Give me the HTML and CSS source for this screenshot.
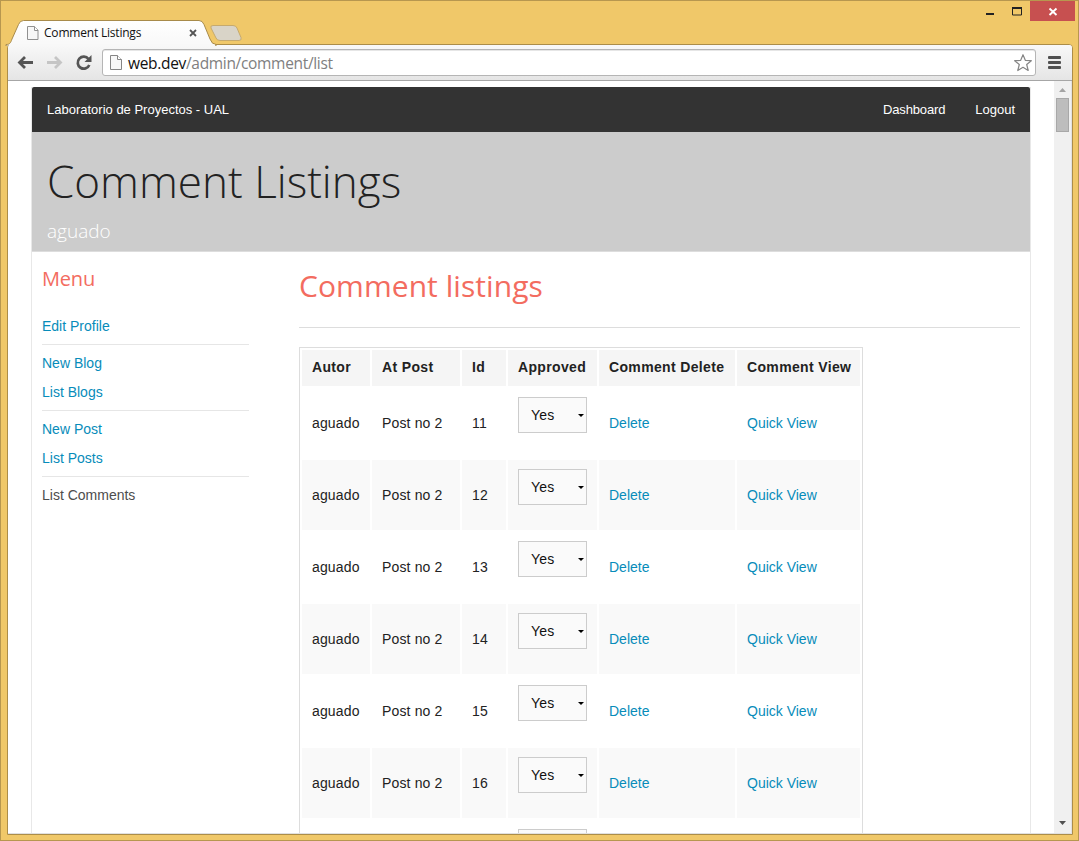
FILE: index.html
```html
<!DOCTYPE html>
<html lang="en">
<head>
<meta charset="utf-8">
<title>Comment Listings</title>
<link rel="stylesheet" href="styles.css">
</head>
<body>
<div class="window">
  <header class="tabstrip">
    <svg class="tab-shapes" width="260" height="46" viewBox="0 0 260 46">
      <defs><linearGradient id="tabfill" x1="0" y1="0" x2="0" y2="1"><stop offset="0" stop-color="#fff"/><stop offset="1" stop-color="#f8f8f8"/></linearGradient></defs>
      <path d="M6 44.5C10 44.500 10.500 43 12 39L18.500 24.500Q20 20.500 23.500 20.500H199Q202.500 20.500 204 24.500L210 39Q212 44.500 216 44.500V46H6Z" fill="url(#tabfill)" stroke="#a88b4b"/>
      <path d="M9 45.500H215" stroke="#f8f8f8" stroke-width="2"/>
      <path d="M213 25.500H233Q236 25.500 237 28L241 37.500Q242 40.500 239 40.500H220Q217 40.500 216 38L211 28Q210 25.500 213 25.500Z" fill="#d9d4c8" stroke="#c6aa6e"/>
    </svg>
    <div class="tab">
      <svg class="page-icon" width="12" height="14" viewBox="0 0 12 14"><path d="M.5.5H7.500L11 4V13.500H.5Z" fill="#f7f7f7" stroke="#909090"/><path d="M7.500.5V4.500H11" fill="#fff" stroke="#909090"/></svg>
      <span class="tab-title">Comment Listings</span>
      <svg class="tab-close" width="8" height="8" viewBox="0 0 8 8"><path d="M1 1L7 7M7 1L1 7" stroke="#555" stroke-width="1.800"/></svg>
    </div>
    <div class="controls">
      <svg width="90" height="21" viewBox="0 0 90 21"><path d="M1 13H9V15H1Z" fill="#222"/><path d="M28 8.500H36.500V15H27.500V8" fill="none" stroke="#222"/><path d="M27 7H37V9H27Z" fill="#222"/><path d="M45 1H90V21H45Z" fill="#c75050"/><path d="M64.500 8.500L71.500 15M71.500 8.500L64.500 15" stroke="#fff" stroke-width="1.900"/></svg>
    </div>
  </header>
  <div class="frame">
    <nav class="toolbar">
      <svg class="nav-icons" width="76" height="20" viewBox="0 0 76 20">
        <path d="M17 9.500H4M9 4L3.500 9.500L9 15" fill="none" stroke="#555" stroke-width="2.800"/>
        <path d="M31 9.500H44M39 4L44.500 9.500L39 15" fill="none" stroke="#c5c5c5" stroke-width="2.800"/>
        <path d="M73.300 12A6 6 0 1 1 72.500 6" fill="none" stroke="#555" stroke-width="2.700"/><path d="M75.500 2V9H68.500Z" fill="#555"/>
      </svg>
      <div class="address">
        <svg class="page-icon" width="12" height="15" viewBox="0 0 12 15"><path d="M.5.5H7.500L11.500 4.500V14.500H.5Z" fill="#f7f7f7" stroke="#858585"/><path d="M7.500.5V4.500H11.500" fill="#fff" stroke="#858585"/></svg>
        <span class="url"><span class="host">web.dev</span>/admin/comment/list</span>
        <svg class="star" width="20" height="20" viewBox="0 0 20 20"><path d="M10 1.700L12.300 7.300L18.300 7.700L13.700 11.500L15.200 17.500L10 14.300L4.800 17.500L6.300 11.500L1.700 7.700L7.700 7.300Z" fill="#fff" stroke="#858585" stroke-width="1.200" stroke-linejoin="round"/></svg>
      </div>
      <svg class="menu-icon" width="13" height="13" viewBox="0 0 13 13"><path d="M1 1.500H12M1 6.500H12M1 11.500H12" stroke="#505050" stroke-width="2.800" stroke-linecap="round"/></svg>
    </nav>
    <div class="viewport">
      <div class="page">
        <div class="topbar"><span>Laboratorio de Proyectos - UAL</span><div class="top-links"><span class="dashboard">Dashboard</span><span>Logout</span></div></div>
        <div class="hero"><h1>Comment Listings</h1><p>aguado</p></div>
        <div class="columns">
          <aside class="sidebar">
            <h2>Menu</h2>
            <ul>
              <li><a>Edit Profile</a></li>
              <li class="split"><a>New Blog</a></li>
              <li><a>List Blogs</a></li>
              <li class="split"><a>New Post</a></li>
              <li><a>List Posts</a></li>
              <li class="split">List Comments</li>
            </ul>
          </aside>
          <main class="main">
            <h2>Comment listings</h2>
            <table class="comments">
              <colgroup><col class="c-autor"><col class="c-post"><col class="c-id"><col class="c-approved"><col class="c-delete"><col class="c-view"></colgroup>
              <thead><tr><th>Autor</th><th>At Post</th><th>Id</th><th>Approved</th><th>Comment Delete</th><th>Comment View</th></tr></thead>
              <tbody>
                <tr><td>aguado</td><td>Post no 2</td><td>11</td><td><div class="select">Yes</div></td><td><a>Delete</a></td><td><a>Quick View</a></td></tr>
                <tr><td>aguado</td><td>Post no 2</td><td>12</td><td><div class="select">Yes</div></td><td><a>Delete</a></td><td><a>Quick View</a></td></tr>
                <tr><td>aguado</td><td>Post no 2</td><td>13</td><td><div class="select">Yes</div></td><td><a>Delete</a></td><td><a>Quick View</a></td></tr>
                <tr><td>aguado</td><td>Post no 2</td><td>14</td><td><div class="select">Yes</div></td><td><a>Delete</a></td><td><a>Quick View</a></td></tr>
                <tr><td>aguado</td><td>Post no 2</td><td>15</td><td><div class="select">Yes</div></td><td><a>Delete</a></td><td><a>Quick View</a></td></tr>
                <tr><td>aguado</td><td>Post no 2</td><td>16</td><td><div class="select">Yes</div></td><td><a>Delete</a></td><td><a>Quick View</a></td></tr>
                <tr><td></td><td></td><td></td><td><div class="select"></div></td><td></td><td></td></tr>
              </tbody>
            </table>
          </main>
        </div>
      </div>
      <div class="scrollbar">
        <svg width="7" height="4" viewBox="0 0 7 4"><path d="M0 4L3.500 0L7 4Z" fill="#a3a3a3"/></svg>
        <div class="thumb"></div>
        <svg class="down" width="7" height="4" viewBox="0 0 7 4"><path d="M0 0H7L3.500 4Z" fill="#505050"/></svg>
      </div>
    </div>
  </div>
</div>
</body>
</html>
```
FILE: styles.css
```css
* { box-sizing: border-box; }
body { margin: 0; overflow: hidden; font: 14px/20px "Liberation Sans", Arial, sans-serif; color: #222; }
h1, h2, p, ul { margin: 0; padding: 0; font-weight: 400; }
a { color: #078cba; }
svg { display: block; flex: none; }
.window { width: 1079px; height: 841px; border: 1px solid #b7974f; background: #f0c869; padding: 0 5px 5px 6px; display: flex; flex-direction: column; }
.tabstrip { height: 43px; display: flex; justify-content: space-between; position: relative; flex: none; }
.tab-shapes { position: absolute; left: -7px; top: -1px; z-index: 2; }
.tab { position: relative; z-index: 3; display: flex; align-items: center; width: 170px; height: 24px; margin: 20px 0 0 20px; }
.tab-title { font: 12px/16px "Open Sans", sans-serif; color: #111; margin-left: 5px; letter-spacing: -.2px; flex: 1; white-space: nowrap; }
.controls { margin: -1px -2px 0 0; }
.frame { flex: 1; min-height: 0; border: 1px solid #ac8d48; border-radius: 4px 4px 0 0; background: #fff; overflow: hidden; display: flex; flex-direction: column; }
.toolbar { height: 36px; flex: none; background: linear-gradient(#f8f8f8, #e5e5e5); border-bottom: 1px solid #a6a6a6; display: flex; align-items: center; padding: 0 10px 0 8px; }
.nav-icons { margin-right: 10px; }
.address { height: 27px; width: 934px; border: 1px solid #b5b5b5; border-radius: 3px; background: #fff; display: flex; align-items: center; padding: 0 2px 0 7px; box-shadow: inset 0 1px #e6e6e6; }
.url { font: 15.5px/22px "Open Sans", sans-serif; color: #808080; margin-left: 6px; letter-spacing: -.32px; flex: 1; }
.host { color: #111; }
.menu-icon { margin-left: 12px; }
.viewport { flex: 1; min-height: 0; display: flex; justify-content: space-between; background: #fff; border: solid #e0e0e0; border-width: 0 1px 1px 0; }
.page { width: 1000px; margin: 6px 0 0 23px; border: solid #e8e8e8; border-width: 0 1px; overflow: hidden; }
.topbar { height: 45px; background: #333; border-radius: 2px 2px 0 0; color: #fff; font-size: 13px; display: flex; align-items: center; justify-content: space-between; padding: 0 15px; }
.top-links { display: flex; gap: 30px; }
.dashboard { letter-spacing: -.15px; }
.hero { height: 120px; background: #ccc; border-bottom: 1px solid #ddd; padding: 18px 15px 0; font-family: "Open Sans", sans-serif; }
.hero h1 { font-size: 44px; line-height: 62px; font-weight: 300; }
.hero p { font-size: 19px; line-height: 26px; font-weight: 300; color: #fff; margin-top: 6px; }
.columns { display: flex; padding: 0 10px; }
.sidebar { width: 207px; margin-right: 50px; flex: none; }
.sidebar h2, .main h2 { font-family: "Open Sans", sans-serif; color: #f36c60; }
.sidebar h2 { font-size: 20px; line-height: 28px; margin: 13px 0 22px; letter-spacing: -.2px; }
.sidebar ul { list-style: none; }
.sidebar li { height: 29px; padding-top: 1px; color: #4d4d4d; }
.sidebar li.split { height: 37px; border-top: 1px solid #e6e6e6; padding-top: 8px; }
.main { flex: 1; min-width: 0; }
.main h2 { height: 76px; font-size: 30px; line-height: 42px; padding-top: 13px; border-bottom: 1px solid #ddd; margin-bottom: 19px; letter-spacing: .06px; }
.comments { width: 564px; table-layout: fixed; border: 1px solid #ddd; border-collapse: separate; border-spacing: 2px; }
.c-autor { width: 68px; }
.c-post { width: 88px; }
.c-id { width: 44px; }
.c-approved { width: 89px; }
.c-delete { width: 136px; }
.c-view { width: 123px; }
.comments th { height: 36px; padding: 0 0 2px 10px; background: #f5f5f5; text-align: left; font-weight: 700; white-space: nowrap; letter-spacing: .35px; }
.comments td { height: 70px; padding: 0 10px; white-space: nowrap; }
.comments td:nth-child(-n+3) { letter-spacing: .15px; }
.comments tbody tr:nth-child(even) td { background: #f9f9f9; }
.select { width: 69px; height: 36px; margin-bottom: 16px; border: 1px solid #ccc; background: #fafafa; padding: 0 2px 0 12px; display: flex; align-items: center; justify-content: space-between; color: #111; letter-spacing: .2px; }
.select::after { content: ""; border: 3px solid transparent; border-top-color: #000; border-bottom: 0; }
.scrollbar { width: 17px; background: #f0f0f0; display: flex; flex-direction: column; align-items: center; padding: 7px 0 8px; }
.thumb { width: 13px; height: 34px; margin-top: 6px; background: #bdbdbd; border: 1px solid #a8a8a8; }
.down { margin-top: auto; }
```
